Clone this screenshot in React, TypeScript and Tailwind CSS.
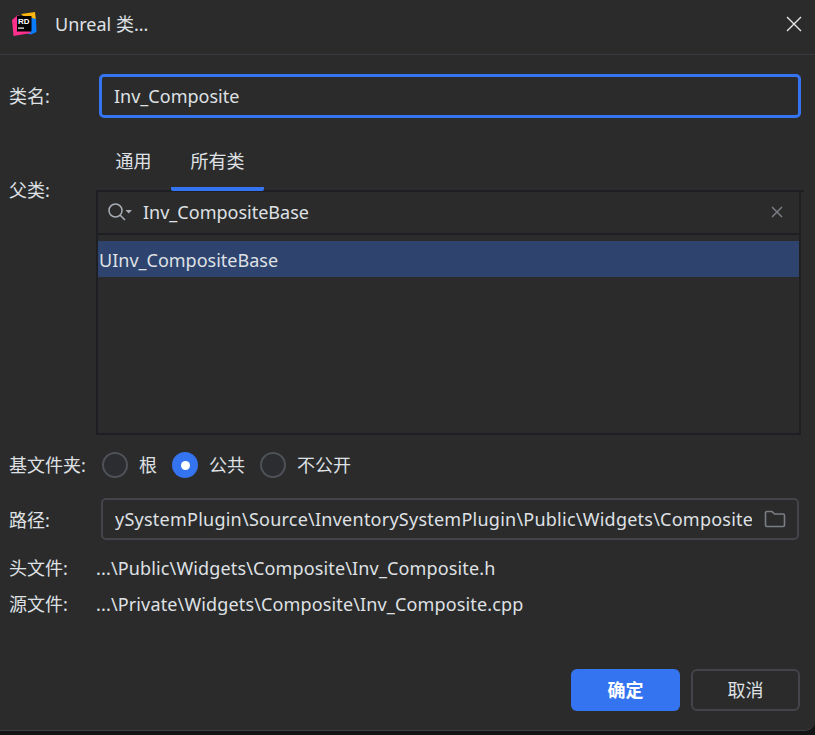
const font = { fontFamily: '"Noto Sans", "Noto Sans CJK SC", sans-serif' };

const Logo = () => (
  <svg width="26" height="26" viewBox="0 0 26 26">
    <path d="M10 3 L24 1 L25 10 L18 10 Z" fill="#fdb60d" />
    <path d="M18 6 L25 8 L25.5 21 L20 23.5 L14 22 Z" fill="#087cfa" />
    <path d="M1 9 L7 4 L20 22 L2.5 25 Z" fill="#ff318c" />
    <rect x="6" y="5" width="14.5" height="15.5" fill="#000" />
    <text x="7" y="13" fontSize="8" fontWeight="700" fill="#fff" fontFamily="Liberation Sans, sans-serif">RD</text>
    <rect x="7" y="16.5" width="6" height="1.2" fill="#fff" />
  </svg>
);

const Radio = ({ label, checked }: { label: string; checked?: boolean }) => (
  <div className="flex items-center gap-[11px]">
    {checked ? (
      <div className="flex h-[26px] w-[26px] items-center justify-center rounded-full bg-[#3574f0]">
        <div className="h-[9px] w-[9px] rounded-full bg-white" />
      </div>
    ) : (
      <div className="h-[26px] w-[26px] rounded-full border-2 border-[#4e5157] bg-[#2b2d30]" />
    )}
    <span>{label}</span>
  </div>
);

export default function App() {
  return (
    <div style={font} className="flex h-[735px] w-[815px] flex-col overflow-hidden bg-[#141414] text-[18px] leading-[24px] text-[#dfe1e5]">
      <div className="flex h-[731px] flex-col rounded-br-[10px] border-b border-[#3c3e42] bg-[#2b2b2b]">
        <div className="flex h-[55px] shrink-0 items-center border-b border-[#393b40] pb-[6px] pl-[11px] pr-[11px]">
          <Logo />
          <span className="ml-[18px] flex-1">Unreal 类...</span>
          <svg width="18" height="18" viewBox="0 0 18 18" stroke="#e6e6e6" strokeWidth="1.4" className="mr-[1px]">
            <path d="M2 2 L16 16 M16 2 L2 16" />
          </svg>
        </div>

        <div className="mt-[19px] flex h-[44px] items-center pl-[9px]">
          <span className="w-[90px]">类名:</span>
          <div className="flex h-[44px] w-[702px] items-center rounded-[5px] border-[3px] border-[#3574f0] pl-[12px]">
            Inv_Composite
          </div>
        </div>

        <div className="mt-[22px] flex pl-[9px]">
          <span className="mt-[38px] w-[87px]">父类:</span>
          <div className="w-[705px]">
            <div className="relative z-10 flex h-[51px]">
              <div className="flex w-[75px] items-center justify-center pb-[10px]">通用</div>
              <div className="flex w-[93px] items-center justify-center rounded-b-[2px] border-b-[4px] border-[#3574f0] pb-[6px]">所有类</div>
            </div>
            <div className="relative -mt-[1px] h-[245px] border-2 border-[#1e1f22]">
              <div className="absolute -right-[5px] -top-[2px] h-[2px] w-[5px] bg-[#1e1f22]" />
              <div className="flex h-[43px] items-center border-b-2 border-[#1e1f22] pb-[1px] pl-[9px] pr-[15px]">
                <svg width="27" height="20" viewBox="0 0 27 20" fill="none" stroke="#a8adb5" strokeWidth="1.5">
                  <circle cx="8.5" cy="8.5" r="6.5" />
                  <path d="M13 13 L18 18" />
                  <path d="M18.5 8 H25 L21.75 11.5 Z" fill="#a8adb5" stroke="none" />
                </svg>
                <span className="ml-[9px] flex-1">Inv_CompositeBase</span>
                <svg width="14" height="14" viewBox="0 0 14 14" stroke="#7a7d83" strokeWidth="1.5">
                  <path d="M2 2 L12 12 M12 2 L2 12" />
                </svg>
              </div>
              <div className="mt-[6px] flex h-[36px] items-center bg-[#2e436e] pl-[1px] pt-[1px]">UInv_CompositeBase</div>
            </div>
          </div>
        </div>

        <div className="mt-[17px] flex h-[26px] items-center pl-[9px]">
          <span className="w-[93px] whitespace-nowrap">基文件夹:</span>
          <div className="flex gap-[15px]">
            <Radio label="根" />
            <Radio label="公共" checked />
            <Radio label="不公开" />
          </div>
        </div>

        <div className="mt-[20px] flex h-[42px] items-center pl-[9px]">
          <span className="w-[92px] pt-[2px]">路径:</span>
          <div className="flex h-[42px] w-[698px] items-center overflow-hidden rounded-[5px] border-2 border-[#43454a] pl-[12px] pr-[11px]">
            <span className="flex-1 overflow-hidden whitespace-nowrap tracking-[0.24px]">ySystemPlugin\Source\InventorySystemPlugin\Public\Widgets\Composite</span>
            <svg width="22" height="20" viewBox="0 0 22 20" fill="none" stroke="#7a7d83" strokeWidth="1.6" className="ml-[12px] shrink-0">
              <path d="M1.5 4 a1.5 1.5 0 0 1 1.5 -1.5 H8 L10.5 5 H19 a1.5 1.5 0 0 1 1.5 1.5 V16 a1.5 1.5 0 0 1 -1.5 1.5 H3 a1.5 1.5 0 0 1 -1.5 -1.5 Z" />
            </svg>
          </div>
        </div>

        <div className="mt-[16px] flex h-[24px] items-center pl-[9px]">
          <span className="w-[87px]">头文件:</span>
          <span className="tracking-[0.14px]">...\Public\Widgets\Composite\Inv_Composite.h</span>
        </div>
        <div className="mt-[12px] flex h-[24px] items-center pl-[9px]">
          <span className="w-[87px]">源文件:</span>
          <span className="tracking-[0.14px]">...\Private\Widgets\Composite\Inv_Composite.cpp</span>
        </div>

        <div className="mt-[53px] flex justify-end gap-[11px] pr-[15px]">
          <button className="h-[42px] w-[109px] rounded-[6px] bg-[#3574f0] font-bold text-white">确定</button>
          <button className="h-[42px] w-[109px] rounded-[6px] border-2 border-[#43454a]">取消</button>
        </div>
      </div>
    </div>
  );
}
